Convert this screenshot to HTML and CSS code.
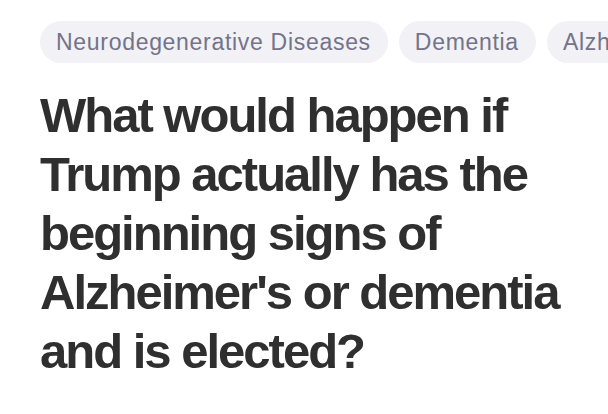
FILE: index.html
```html
<!DOCTYPE html>
<html>
<head>
<meta charset="utf-8">
<link rel="stylesheet" href="styles.css">
</head>
<body>
<div class="page">
  <div class="tags">
    <span class="tag">Neurodegenerative Diseases</span>
    <span class="tag">Dementia</span>
    <span class="tag">Alzheimer's Disease</span>
  </div>
  <h1 class="title">What would happen if Trump actually has the beginning signs of Alzheimer's or dementia and is elected?</h1>
</div>
</body>
</html>
```
FILE: styles.css
```css
html, body {
  margin: 0;
  padding: 0;
  background: #ffffff;
}
.page {
  padding: 21px 0 0 40px;
  width: 568px;
  height: 393px;
  overflow: hidden;
  font-family: "Liberation Sans", Arial, sans-serif;
}
.tags {
  display: flex;
  gap: 11px;
  white-space: nowrap;
}
.tag {
  flex: none;
  height: 42px;
  line-height: 42px;
  padding: 0 17px 0 16px;
  border-radius: 21px;
  background: #f1f1f6;
  color: #73738a;
  font-size: 23px;
  letter-spacing: 0.7px;
}
.title {
  margin: 23px 0 0 0;
  width: 540px;
  font-size: 49px;
  line-height: 59px;
  font-weight: 700;
  color: #2f2f2f;
  letter-spacing: -2px;
}
```
